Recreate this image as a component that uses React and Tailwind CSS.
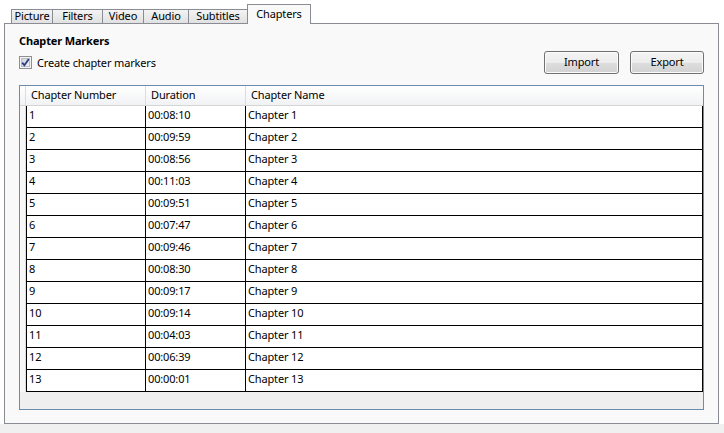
const tabs = [
  { label: "Picture", w: "w-[42px]" },
  { label: "Filters", w: "w-[51px]" },
  { label: "Video", w: "w-[42px]" },
  { label: "Audio", w: "w-[46px]" },
  { label: "Subtitles", w: "w-[60px]" },
];

const chapters = [
  ["1", "00:08:10"],
  ["2", "00:09:59"],
  ["3", "00:08:56"],
  ["4", "00:11:03"],
  ["5", "00:09:51"],
  ["6", "00:07:47"],
  ["7", "00:09:46"],
  ["8", "00:08:30"],
  ["9", "00:09:17"],
  ["10", "00:09:14"],
  ["11", "00:04:03"],
  ["12", "00:06:39"],
  ["13", "00:00:01"],
];

function Checkbox() {
  return (
    <svg width="13" height="13" viewBox="0 0 13 13">
      <defs>
        <linearGradient id="cbg" x1="0" y1="0" x2="1" y2="1">
          <stop offset="0" stopColor="#cbcfd5" />
          <stop offset="1" stopColor="#f6f6f6" />
        </linearGradient>
      </defs>
      <rect x="0.5" y="0.5" width="12" height="12" fill="#f4f4f4" stroke="#8e8f8f" />
      <rect x="2.5" y="2.5" width="8" height="8" fill="url(#cbg)" stroke="#b9bec6" />
      <path d="M3.2 6.6 L5.4 9.3 L9.8 2.9" fill="none" stroke="#2b3f86" strokeWidth="1.8" />
    </svg>
  );
}

function Button({ children }) {
  return (
    <button className="w-full h-[23px] rounded-[3px] border border-[#707070] bg-[linear-gradient(180deg,#f4f4f4_0%,#ececec_50%,#dedede_50%,#d2d2d2_100%)] text-black shadow-[inset_0_0_0_1px_#fbfbfb] flex items-center justify-center pb-[1px]">
      {children}
    </button>
  );
}

export default function App() {
  return (
    <div className="w-[724px] h-[433px] bg-white flex flex-col font-['Noto_Sans',sans-serif] text-[11px] tracking-[-0.15px] text-black">
      <div className="flex-1 flex flex-col pl-[4px] pr-[5px] pt-[4px]">
        {/* tab strip */}
        <div className="relative z-10 -mb-[1px] flex items-end h-[20px] pl-[7px]">
          {tabs.map((t, i) => (
            <div
              key={t.label}
              className={`${t.w} ${i > 0 ? "-ml-[1px]" : ""} h-[15px] border border-[#898c95] bg-[linear-gradient(180deg,#f3f3f3,#e1e1e1)] flex items-center justify-center leading-none pb-[2px]`}
            >
              {t.label}
            </div>
          ))}
          <div className="w-[64px] -ml-[1px] h-[20px] border border-b-0 border-[#898c95] bg-[#f9f9f9] flex items-center justify-center leading-none pb-[3px]">
            Chapters
          </div>
        </div>

        {/* panel */}
        <div className="flex-1 flex flex-col border border-[#898c95] bg-[#f9f9f9] px-[14px] pt-[9px] pb-[13px]">
          <div className="font-bold leading-[16px]">Chapter Markers</div>

          <div className="mt-[2px] flex items-center justify-between h-[23px]">
            <label className="flex items-center">
              <Checkbox />
              <span className="ml-[5px] leading-none">Create chapter markers</span>
            </label>
            <div className="flex gap-[11px]">
              <div className="w-[75px]">
                <Button>Import</Button>
              </div>
              <div className="w-[74px]">
                <Button>Export</Button>
              </div>
            </div>
          </div>

          {/* chapter grid */}
          <div className="mt-[11px] flex-1 flex flex-col border border-[#6d8cab] bg-[#efefef]">
            <div className="flex h-[20px] border-b border-[#d5d5d5] bg-[linear-gradient(180deg,#ffffff,#f1f2f4)]">
              <div className="w-[6px] border-r border-[#dcdcdc]" />
              <div className="w-[120px] border-r border-[#dcdcdc] pl-[5px] flex items-center">Chapter Number</div>
              <div className="w-[100px] border-r border-[#dcdcdc] pl-[5px] flex items-center">Duration</div>
              <div className="flex-1 pl-[5px] flex items-center">Chapter Name</div>
            </div>
            {chapters.map(([n, d]) => (
              <div key={n} className="flex h-[22px]">
                <div className="w-[6px] border-r border-[#dcdcdc] bg-[#f7f7f7]" />
                <div className="w-[120px] border-l border-r border-b border-black bg-white pl-[2px] pb-[3px] flex items-center">{n}</div>
                <div className="w-[100px] border-r border-b border-black bg-white pl-[2px] pb-[3px] flex items-center">{d}</div>
                <div className="w-[457px] border-r border-b border-black bg-white pl-[2px] pb-[3px] flex items-center">Chapter {n}</div>
              </div>
            ))}
          </div>
        </div>
      </div>
      <div className="h-[9px] bg-[#f0f0f0]" />
    </div>
  );
}
